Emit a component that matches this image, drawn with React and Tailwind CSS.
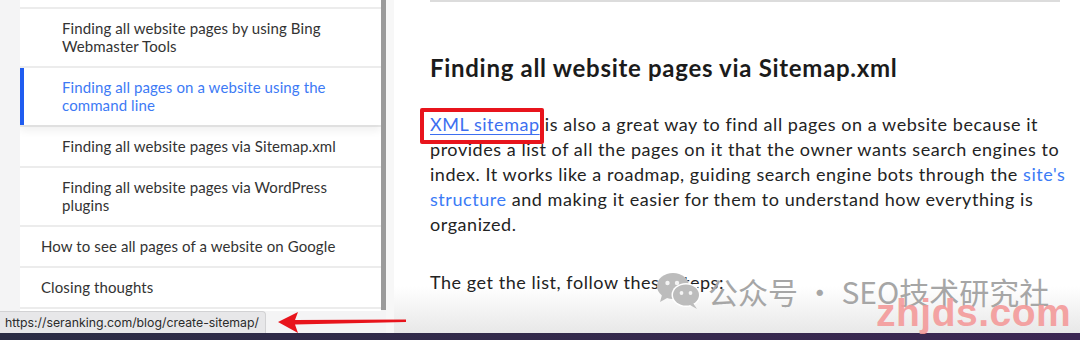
import React from "react";

const items = [
  { text: "Finding all website pages by using Bing Webmaster Tools", sub: true },
  { text: "Finding all pages on a website using the command line", sub: true, active: true },
  { text: "Finding all website pages via Sitemap.xml", sub: true },
  { text: "Finding all website pages via WordPress plugins", sub: true },
  { text: "How to see all pages of a website on Google" },
  { text: "Closing thoughts" },
];

const TocItem = ({ item }) => (
  <div
    className={`relative shrink-0 bg-white pt-[10px] pr-[30px] text-[15px] leading-[18px] tracking-[0.1px] ${
      item.sub ? "pl-[42px]" : "pl-[21px]"
    } ${item.active ? "text-[#3d7af5] pb-[11px] z-10 shadow-[0_6px_8px_rgba(0,0,0,0.06)]" : "text-[#333333] pb-[11px]"}`}
  >
    {item.active && <div className="absolute left-0 top-0 bottom-0 w-[4px] bg-[#1f5cf0]" />}
    {item.text}
  </div>
);

const WeChatIcon = () => (
  <svg width="46" height="38" viewBox="0 0 46 38" className="block">
    <ellipse cx="17" cy="14" rx="16" ry="13" fill="#bcbcbc" />
    <path d="M6 23 L4 30 L13 25 Z" fill="#bcbcbc" />
    <ellipse cx="30" cy="23" rx="14.5" ry="12" fill="#ffffff" />
    <ellipse cx="30" cy="23" rx="13" ry="10.5" fill="#bcbcbc" />
    <path d="M37 31 L41 37 L33 32.5 Z" fill="#bcbcbc" />
    <circle cx="11.5" cy="11" r="2.2" fill="#f4f4f4" />
    <circle cx="21" cy="11" r="2.2" fill="#f4f4f4" />
    <circle cx="25.5" cy="21" r="1.9" fill="#f4f4f4" />
    <circle cx="34.5" cy="21" r="1.9" fill="#f4f4f4" />
  </svg>
);

export default function App() {
  return (
    <div className="relative w-[1080px] h-[340px] overflow-hidden bg-[#f4f4f5] font-['Lato',sans-serif]">
      <div className="flex h-[333px]">
        <div className="w-[20px] shrink-0 bg-[#f4f4f5]" />
        <div className="w-[361px] shrink-0 h-[311px] overflow-hidden flex flex-col gap-[2px] bg-[#ececec]">
          <div className="h-[7px] shrink-0 bg-white" />
          {items.map((item, i) => (
            <TocItem key={i} item={item} />
          ))}
          <div className="flex-1 bg-white" />
        </div>
        <div className="w-[5px] shrink-0 h-[310px] bg-[#9b9b9b]" />
        <div className="flex-1 flex bg-linear-to-b from-white from-[86%] to-[#e8e8e8] border-l-[8px] border-[#f7f7f7]">
          <div className="ml-[36px] w-[642px] flex flex-col">
            <div className="h-[2px] w-[630px] bg-[#dcdcdc]" />
            <h2 className="mt-[52px] text-[24px] leading-[28px] font-bold text-[#1b1b1b] tracking-[0.7px]">
              Finding all website pages via Sitemap.xml
            </h2>
            <p className="mt-[30px] text-[18px] leading-[25px] text-[#232323] tracking-[0.55px]">
              <span className="text-[#3d6ff0] underline underline-offset-[3px]">XML sitemap</span> is also a great way to find
              all pages on a website because it provides a list of all the pages on it that the owner wants search
              engines to index. It works like a roadmap, guiding search engine bots through the{" "}
              <span className="text-[#3b7bf6]">site's structure</span> and making it easier for them to understand how
              everything is organized.
            </p>
            <p className="mt-[33px] text-[18px] leading-[25px] text-[#232323] tracking-[0.55px]">
              The get the list, follow these steps:
            </p>
          </div>
        </div>
      </div>
      <div className="h-[7px] bg-linear-to-r from-[#2a2c44] to-[#3c2753]" />

      {/* red highlight box */}
      <div className="absolute left-[420px] top-[108px] w-[124px] h-[36px] border-[4px] border-[#e8141c] rounded-[2px]" />

      {/* status bar */}
      <div className="absolute left-0 top-[311px] w-[266px] h-[22px] bg-[#e7e7e9] border-t border-r border-[#d2d2d4] rounded-tr-[4px] pl-[5px] whitespace-nowrap overflow-hidden text-[12.3px] leading-[21px] text-[#2b2b2b] font-['Inter',sans-serif]">
        https://seranking.com/blog/create-sitemap/
      </div>

      {/* red arrow */}
      <svg className="absolute left-[274px] top-[309px]" width="134" height="26" viewBox="0 0 134 26">
        <path d="M4 13 L24 3 L21 11 L132 10.5 L132 13 L21 15.5 L24 24 Z" fill="#e8141c" />
      </svg>

      {/* watermark */}
      <div className="absolute left-[656px] top-[272px] flex items-center gap-[6px]">
        <WeChatIcon />
        <span className="text-[30px] leading-[36px] font-normal text-[#a6a6a6] font-['Noto_Sans_CJK_SC',sans-serif]">
          公众号 · SEO技术研究社
        </span>
      </div>
      <div className="absolute left-[876px] top-[293px] text-[39px] leading-[40px] font-bold text-[#f49a9a] opacity-90 font-['Liberation_Sans',sans-serif] tracking-[0.5px]">
        zhjds.com
      </div>
    </div>
  );
}
